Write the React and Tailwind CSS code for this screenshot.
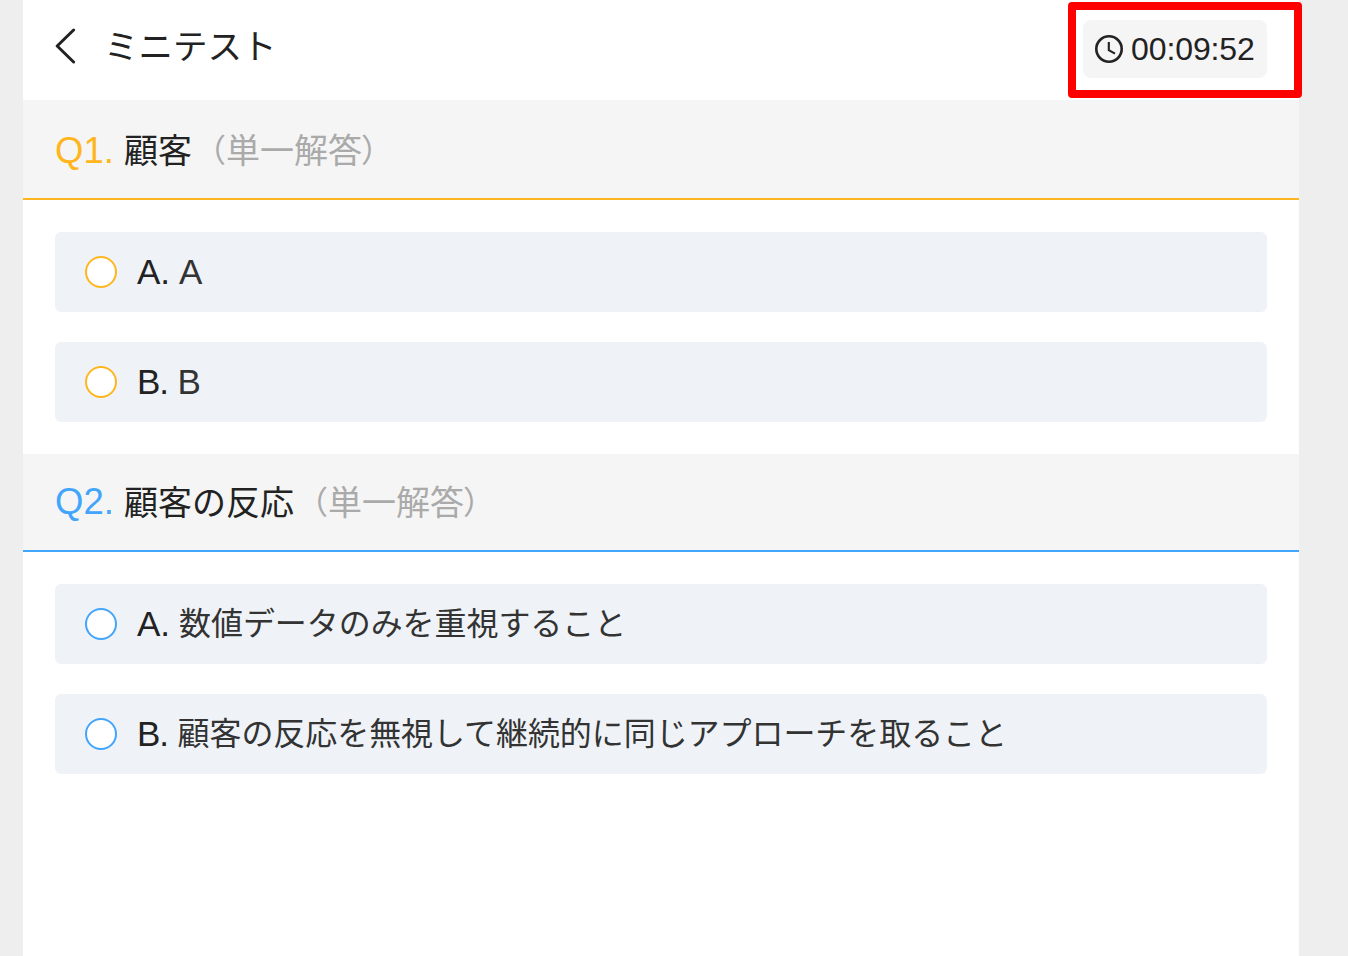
import React, { useState } from 'react';

const questions = [
  {
    id: 'Q1',
    title: '顧客',
    type: '単一解答',
    text: 'text-[#ffb61e]',
    border: 'border-[#ffb61e]',
    header: 'h-[100px] pt-1',
    options: [
      { key: 'A', label: 'A', latin: true },
      { key: 'B', label: 'B', latin: true },
    ],
  },
  {
    id: 'Q2',
    title: '顧客の反応',
    type: '単一解答',
    text: 'text-[#42a5fb]',
    border: 'border-[#42a5fb]',
    header: 'h-[98px] pt-px',
    options: [
      { key: 'A', label: '数値データのみを重視すること' },
      { key: 'B', label: '顧客の反応を無視して継続的に同じアプローチを取ること' },
    ],
  },
];

const BackIcon = () => (
  <svg width="22" height="36" viewBox="0 0 22 36" fill="none" stroke="#222" strokeWidth="3">
    <path d="M18.6 2L2.2 18L18.6 34" strokeLinecap="round" strokeLinejoin="round" />
  </svg>
);

const ClockIcon = () => (
  <svg width="28" height="28" viewBox="0 0 28 28" fill="none" stroke="#222">
    <circle cx="14" cy="14" r="12.7" strokeWidth="2.6" />
    <path d="M13.8 7V15.2L20 18.6" strokeWidth="2.1" />
  </svg>
);

const Question = ({ question, selected, onSelect }) => (
  <section>
    <h2 className={`flex items-center border-b-2 bg-[#f5f5f5] pl-8 text-[34px] leading-none ${question.header} ${question.border}`}>
      <span className={`w-[69px] text-[36.5px] ${question.text}`}>{question.id}.</span>
      <span className="text-[#222]">{question.title}</span>
      <span className="flex items-center text-[#aaa]">
        <span className="w-[34px] text-right text-[32px]">（</span>
        {question.type}
        <span className="-ml-px w-[34px] text-[32px]">）</span>
      </span>
    </h2>
    <div className="space-y-[30px] px-8 py-8">
      {question.options.map((option) => (
        <button
          key={option.key}
          onClick={() => onSelect(option.key)}
          className="flex h-20 w-full items-center rounded-md bg-[#eff3f8] pl-[30px] text-left"
        >
          <span className={`mr-5 flex size-8 items-center justify-center rounded-full border-2 bg-white ${question.border}`}>
            {selected === option.key && <span className="size-4 rounded-full bg-gray-500" />}
          </span>
          <span className={`pb-0.5 text-[35px] leading-none text-[#222] ${option.key === 'A' ? 'w-[42px]' : 'w-[40.5px] -tracking-[1px]'}`}>
            {option.key}.
          </span>
          <span className={`leading-none text-[#333] ${option.latin ? 'pb-0.5 text-[35px]' : 'text-[32px] -tracking-[0.06px]'}`}>
            {option.label}
          </span>
        </button>
      ))}
    </div>
  </section>
);

const App = () => {
  const [answers, setAnswers] = useState({});

  return (
    <div className="h-screen overflow-hidden bg-[#eee] pr-[49px] pl-[23px] font-['Liberation_Sans','Noto_Sans_CJK_JP',sans-serif]">
      <main className="h-full bg-white">
        <header className="relative flex h-[100px] items-center justify-between px-8 pb-0.5">
          <div className="flex items-center gap-7 pb-1.5">
            <BackIcon />
            <h1 className="-ml-px pt-0.5 text-[34.5px] leading-none text-[#222]">ミニテスト</h1>
          </div>
          <div className="flex h-[58px] w-[184px] items-center gap-2 rounded-lg bg-[#f5f5f5] pl-3 text-[32px] text-[#222]">
            <ClockIcon />
            <span className="-tracking-[0.1px]">00:09:52</span>
          </div>
          {/* Highlight around the remaining time */}
          <div className="absolute top-[2px] -right-[3px] h-24 w-[234px] rounded border-8 border-[#ff0000]" />
        </header>
        {questions.map((question) => (
          <Question
            key={question.id}
            question={question}
            selected={answers[question.id]}
            onSelect={(key) => setAnswers({ ...answers, [question.id]: key })}
          />
        ))}
      </main>
    </div>
  );
};

export default App;
